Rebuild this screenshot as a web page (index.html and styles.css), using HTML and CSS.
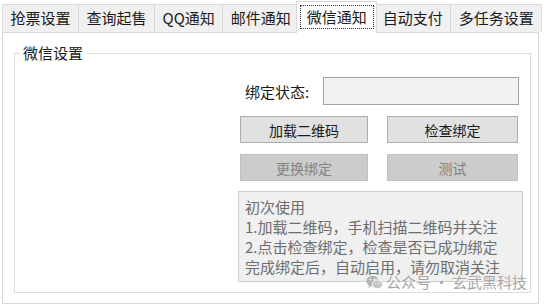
FILE: index.html
```html
<!DOCTYPE html>
<html lang="zh-CN">
<head>
    <meta charset="UTF-8">
    <meta name="viewport" content="width=device-width, initial-scale=1.0">
    <title>微信通知</title>
    <link rel="stylesheet" href="styles.css">
</head>
<body>
    <div class="tabs">
        <div class="tab">抢票设置</div>
        <div class="tab">查询起售</div>
        <div class="tab">QQ通知</div>
        <div class="tab">邮件通知</div>
        <div class="tab active"><span class="focus">微信通知</span></div>
        <div class="tab">自动支付</div>
        <div class="tab">多任务设置</div>
    </div>

    <div class="panel">
        <fieldset class="group">
            <legend>微信设置</legend>

            <div class="content">
                <div class="status-row">
                    <label for="bind-status">绑定状态:</label>
                    <input id="bind-status" class="status-input" type="text" readonly>
                </div>

                <div class="btn-row">
                    <button class="btn btn-load">加载二维码</button>
                    <button class="btn btn-check">检查绑定</button>
                </div>

                <div class="btn-row">
                    <button class="btn btn-load" disabled>更换绑定</button>
                    <button class="btn btn-check" disabled>测试</button>
                </div>

                <div class="notes">
                    初次使用<br>
                    1.加载二维码，手机扫描二维码并关注<br>
                    2.点击检查绑定，检查是否已成功绑定<br>
                    完成绑定后，自动启用，请勿取消关注
                </div>

                <div class="watermark">
                    <svg class="wm-icon" width="17" height="15" viewBox="0 0 17 15">
                        <ellipse cx="6.5" cy="6" rx="6.2" ry="5.3" fill="#b4b4b4"/>
                        <path d="M3 10 L2.2 13 L5.5 11 Z" fill="#b4b4b4"/>
                        <ellipse cx="11.5" cy="9.3" rx="5.2" ry="4.4" fill="#c4c4c4" stroke="#fff" stroke-width="1"/>
                        <circle cx="4.5" cy="4.6" r="0.9" fill="#fff"/>
                        <circle cx="8.4" cy="4.6" r="0.9" fill="#fff"/>
                        <circle cx="9.9" cy="8.6" r="0.7" fill="#fff"/>
                        <circle cx="13.1" cy="8.6" r="0.7" fill="#fff"/>
                    </svg>
                    <span>公众号&thinsp;·&thinsp;玄武黑科技</span>
                </div>
            </div>
        </fieldset>
    </div>
</body>
</html>
```

FILE: styles.css
```css
:root {
    --tab-border: #d9d9d9;
    --tab-bg: #f0f0f0;
    --group-border: #dcdcdc;
    --btn-bg: #e1e1e1;
    --btn-border: #adadad;
    --btn-disabled-bg: #cccccc;
    --btn-disabled-border: #bfbfbf;
    --btn-disabled-text: #838383;
}

* {
    box-sizing: border-box;
    margin: 0;
    padding: 0;
}

body {
    font-family: "Noto Sans CJK SC", "Microsoft YaHei", sans-serif;
    font-size: 15px;
    color: #1a1a1a;
    background-color: white;
}

/* tab strip */
.tabs {
    display: flex;
    align-items: flex-end;
    height: 32px;
    padding-left: 2px;
}

.tab {
    height: 28px;
    line-height: 26px;
    padding: 0 7.5px;
    margin-left: -1px;
    border: 1px solid var(--tab-border);
    border-bottom: none;
    background-color: var(--tab-bg);
    white-space: nowrap;
}

.tab:first-child {
    margin-left: 0;
}

.tab.active {
    position: relative;
    z-index: 1;
    height: 32px;
    margin: 0 -2px -1px -3px;
    padding: 3px 2.5px 0;
    line-height: 22px;
    background-color: white;
}

.focus {
    display: block;
    padding: 0 6px;
    border: 1px dotted #333;
}

/* page */
.panel {
    height: 272px;
    margin: 0 5px 0 2px;
    padding: 10px 7px 0 11px;
    border: 1px solid var(--tab-border);
}

.group {
    height: 250px;
    border: 1px solid var(--group-border);
    min-width: 0;
}

.group legend {
    margin-left: 5px;
    padding: 0 3px;
    line-height: 20px;
}

.content {
    position: relative;
    width: 285px;
    margin-left: 223px;
    padding-top: 14px;
}

.status-row {
    display: flex;
    align-items: center;
    padding: 0 4px 0 7px;
}

.status-input {
    width: 196px;
    height: 28px;
    margin-left: auto;
    border: 1px solid #a3a3a3;
    background-color: #f2f2f2;
    outline: none;
}

.btn-row {
    display: flex;
    gap: 19px;
    padding: 0 5px 0 2px;
    margin-top: 11px;
}

.btn {
    height: 27px;
    font-family: inherit;
    font-size: 14px;
    color: #1a1a1a;
    background-color: var(--btn-bg);
    border: 1px solid var(--btn-border);
}

.btn-load {
    width: 128px;
}

.btn-check {
    width: 131px;
}

.btn:disabled {
    color: var(--btn-disabled-text);
    background-color: var(--btn-disabled-bg);
    border-color: var(--btn-disabled-border);
}

.notes {
    height: 91px;
    margin-top: 10px;
    padding: 5px 6px 0;
    line-height: 20px;
    color: #6e6e6e;
    background-color: #f0f0f0;
    border: 1px solid #cfcfcf;
    overflow: hidden;
    white-space: nowrap;
}

.watermark {
    position: absolute;
    left: 128px;
    top: 209px;
    display: flex;
    align-items: center;
    gap: 3px;
    color: #a6a6a6;
    line-height: 20px;
    text-shadow: 0 0 2px rgba(255, 255, 255, 0.9);
    white-space: nowrap;
}
```
